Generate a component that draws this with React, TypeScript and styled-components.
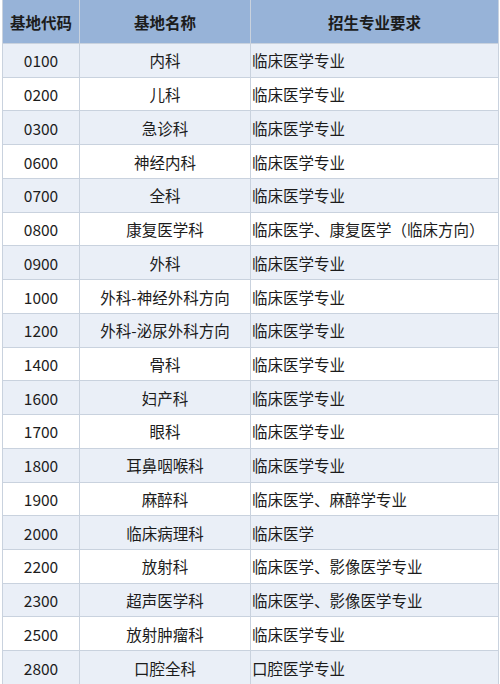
import styled, { createGlobalStyle } from 'styled-components';

const GlobalStyle = createGlobalStyle`
  html, body {
    margin: 0;
    padding: 0;
    background: #ffffff;
  }
  body {
    font-family: 'Noto Sans CJK SC', 'Noto Sans', sans-serif;
    color: #1c1c1c;
  }
`;

interface Row {
  code: string;
  name: string;
  major: string;
}

const rows: Row[] = [
  { code: '0100', name: '内科', major: '临床医学专业' },
  { code: '0200', name: '儿科', major: '临床医学专业' },
  { code: '0300', name: '急诊科', major: '临床医学专业' },
  { code: '0600', name: '神经内科', major: '临床医学专业' },
  { code: '0700', name: '全科', major: '临床医学专业' },
  { code: '0800', name: '康复医学科', major: '临床医学、康复医学（临床方向）' },
  { code: '0900', name: '外科', major: '临床医学专业' },
  { code: '1000', name: '外科-神经外科方向', major: '临床医学专业' },
  { code: '1200', name: '外科-泌尿外科方向', major: '临床医学专业' },
  { code: '1400', name: '骨科', major: '临床医学专业' },
  { code: '1600', name: '妇产科', major: '临床医学专业' },
  { code: '1700', name: '眼科', major: '临床医学专业' },
  { code: '1800', name: '耳鼻咽喉科', major: '临床医学专业' },
  { code: '1900', name: '麻醉科', major: '临床医学、麻醉学专业' },
  { code: '2000', name: '临床病理科', major: '临床医学' },
  { code: '2200', name: '放射科', major: '临床医学、影像医学专业' },
  { code: '2300', name: '超声医学科', major: '临床医学、影像医学专业' },
  { code: '2500', name: '放射肿瘤科', major: '临床医学专业' },
  { code: '2800', name: '口腔全科', major: '口腔医学专业' },
];

const Table = styled.div`
  margin-left: 2px;
  width: 495px;
  border-left: 1px solid #c9d2de;
  border-right: 1px solid #c9d2de;
  border-bottom: 1px solid #c9d2de;
`;

const Line = styled.div<{ $header?: boolean; $shaded?: boolean }>`
  display: grid;
  grid-template-columns: 77px 171px 1fr;
  height: ${(p) => (p.$header ? '43px' : '33.74px')};
  box-sizing: border-box;
  border-top: ${(p) => (p.$header ? 'none' : '1px solid #c9d2de')};
  background: ${(p) => (p.$header ? '#97b3d8' : p.$shaded ? '#eaeff7' : '#ffffff')};
  font-weight: ${(p) => (p.$header ? 700 : 400)};
  font-size: 15.5px;
`;

const Cell = styled.div<{ $align: 'center' | 'left'; $divider?: boolean }>`
  display: flex;
  align-items: center;
  justify-content: ${(p) => (p.$align === 'center' ? 'center' : 'flex-start')};
  padding-left: ${(p) => (p.$align === 'left' ? '1px' : '0')};
  border-right: ${(p) => (p.$divider ? '1px solid #c9d2de' : 'none')};
  white-space: nowrap;
  overflow: hidden;
`;

export default function App() {
  return (
    <>
      <GlobalStyle />
      <Table>
        <Line $header>
          <Cell $align="center" $divider>基地代码</Cell>
          <Cell $align="center" $divider>基地名称</Cell>
          <Cell $align="center">招生专业要求</Cell>
        </Line>
        {rows.map((row, i) => (
          <Line key={row.code} $shaded={i % 2 === 0}>
            <Cell $align="center" $divider>{row.code}</Cell>
            <Cell $align="center" $divider>{row.name}</Cell>
            <Cell $align="left">{row.major}</Cell>
          </Line>
        ))}
      </Table>
    </>
  );
}
